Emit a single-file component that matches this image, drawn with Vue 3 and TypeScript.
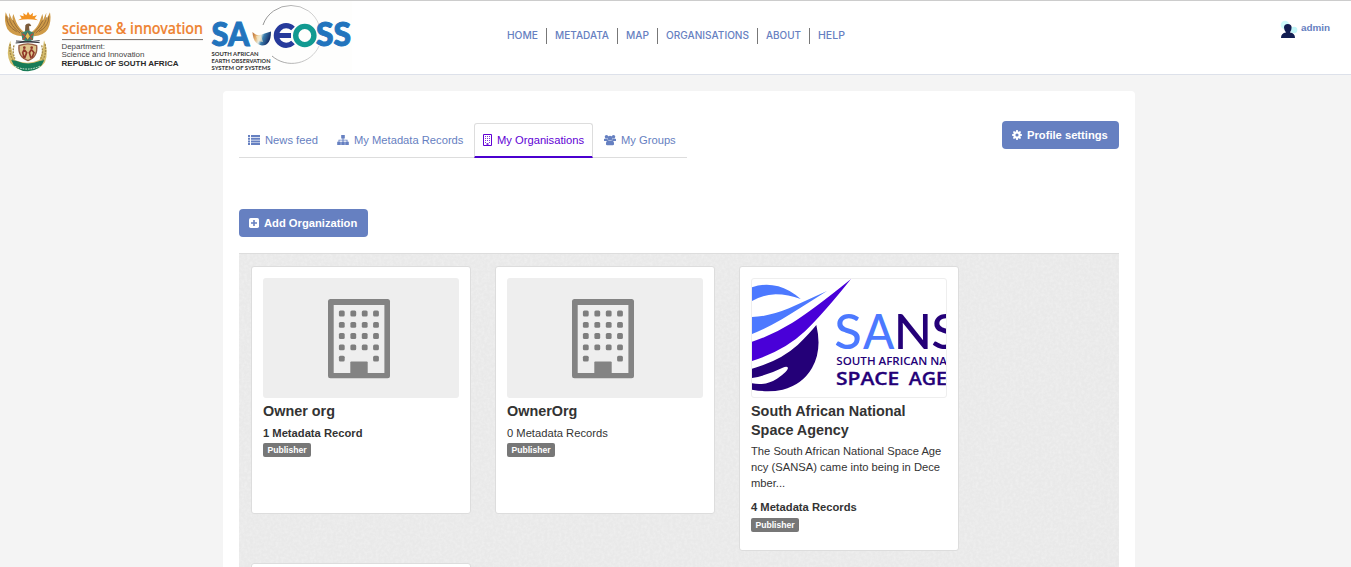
<script setup lang="ts">
interface NavItem { label: string; width: number; cell: number }
interface Org { name: string; description?: string; records: string; strong: boolean; logo: 'building' | 'sansa' }

const nav: NavItem[] = [
  { label: 'HOME', width: 31, cell: 48 },
  { label: 'METADATA', width: 54, cell: 71 },
  { label: 'MAP', width: 23, cell: 40 },
  { label: 'ORGANISATIONS', width: 83, cell: 100 },
  { label: 'ABOUT', width: 35, cell: 52 },
  { label: 'HELP', width: 27, cell: 36 },
]

const orgs: Org[] = [
  { name: 'Owner org', records: '1 Metadata Record', strong: true, logo: 'building' },
  { name: 'OwnerOrg', records: '0 Metadata Records', strong: false, logo: 'building' },
  {
    name: 'South African National Space Agency',
    description: 'The South African National Space Agency (SANSA) came into being in December...',
    records: '4 Metadata Records', strong: true, logo: 'sansa',
  },
]
const dotsX = [78.8, 90.3, 101.7, 113]
const dotsY = [35.5, 46.8, 58, 69.3, 80.6]
const windows = dotsY.flatMap((y, r) => dotsX.filter((_, c) => r < 4 || c === 0 || c === 3).map((x) => ({ x, y })))
</script>

<template>
  <div class="page">
    <header class="header">
      <svg class="brand" width="360" height="73" viewBox="0 1 360 73">
        <defs>
          <linearGradient id="globe" x1="0" x2="1" y1="0" y2="0.3">
            <stop offset="0" stop-color="#b5652a" /><stop offset="0.3" stop-color="#e8b878" />
            <stop offset="0.5" stop-color="#dfe9e4" /><stop offset="0.65" stop-color="#3b7fae" /><stop offset="1" stop-color="#152c66" />
          </linearGradient>
          <linearGradient id="orbit" x1="0" x2="1"><stop offset="0" stop-color="#777" /><stop offset="1" stop-color="#ccc" /></linearGradient>
        </defs>
        <rect x="0" y="1" width="352" height="72" fill="#fefefd" />
        <g transform="scale(.33333)">
          <path d="M31 122Q16 160 31 189Q48 211 83 212Q120 210 135 187Q147 155 132 121Q128 160 118 180Q82 196 46 181Q34 155 31 122Z" fill="#d6bd6c" />
          <path d="M34 180Q44 213 84 214Q123 211 133 180L119 183Q84 198 48 182Z" fill="#187b57" />
          <path d="M45 199Q82 216 121 198" fill="none" stroke="#d9e9d8" stroke-width="3" stroke-dasharray="5 3" />
          <path d="M31 132Q26 158 39 180M135 132Q141 158 128 180M42 136Q36 158 45 176M125 136Q131 158 122 176" fill="none" stroke="#a5894a" stroke-width="4" stroke-dasharray="6 3" />
          <path d="M17 37Q11 65 22 87Q34 106 66 109L75 99Q57 85 49 67L40 42Q36 50 38 62L27 38L29 62ZM150 37Q155 65 144 87Q132 106 102 109L92 99Q111 85 118 67L127 42Q131 50 128 62L139 38L137 62Z" fill="#cf9b48" />
          <path d="M20 49Q19 78 50 95M27 52Q31 77 60 99M38 61Q48 82 66 99M146 49Q148 78 117 95M140 52Q136 77 107 99M129 61Q119 82 101 99" fill="none" stroke="#8d6434" stroke-width="2.5" />
          <path d="M54 61L65 55L59 46L71 49L70 39L79 46L84 35L90 46L99 38L98 49L111 46L104 55L114 61Q84 55 54 61Z" fill="#f39321" />
          <path d="M76 76Q80 68 90 71L94 78L87 79L89 95L84 105L75 94Z" fill="#7b5b39" />
          <path d="M64 98L83 91L102 98L99 119L84 127L67 119Z" fill="#3e876c" />
          <path d="M67 101L77 110L69 119M99 101L89 110L97 119" fill="none" stroke="#c54833" stroke-width="4" />
          <path d="M83 95L91 109L83 121L75 109Z" fill="#e3bf51" stroke="#344d66" stroke-width="2" />
          <path d="M48 123L119 128M47 129L119 122" stroke="#33343c" stroke-width="3" />
          <path d="M57 137Q84 126 110 137Q114 171 84 182Q53 171 57 137Z" fill="#dcc58c" stroke="#965c42" stroke-width="4" />
          <circle cx="73" cy="143" r="4" fill="#91382a" /><circle cx="95" cy="143" r="4" fill="#91382a" />
          <path d="M73 148L68 158L73 175M73 149L80 158L74 174M95 148L88 158L93 175M95 149L102 158L96 173" fill="none" stroke="#91382a" stroke-width="5" />
        </g>
        <text x="62" y="34.2" class="dsi" textLength="141" lengthAdjust="spacingAndGlyphs">science &amp; innovation</text>
        <path d="M62 39.6H203" stroke="#776f68" stroke-width="1" />
        <g class="department">
          <text x="61.5" y="48.5" textLength="43.5" lengthAdjust="spacingAndGlyphs">Department:</text>
          <text x="61.5" y="57.3" textLength="83" lengthAdjust="spacingAndGlyphs">Science and Innovation</text>
          <text x="61.5" y="66" class="republic" textLength="117" lengthAdjust="spacingAndGlyphs">REPUBLIC OF SOUTH AFRICA</text>
        </g>
        <path d="M263 25A29.5 28.5 0 0 1 319 25M319 46A29.5 28.5 0 0 1 272 56" fill="none" stroke="url(#orbit)" stroke-width=".8" />
        <text x="211.5" y="46" class="saeoss" textLength="38" lengthAdjust="spacingAndGlyphs">SA</text>
        <text x="316" y="46" class="saeoss" textLength="35" lengthAdjust="spacingAndGlyphs">SS</text>
        <path d="M252.5 32Q257 37 263 34L271 31.5Q271 45.5 262 45.5Q253 44 252.5 32Z" fill="url(#globe)" />
        <path d="M256 36L261 35L263 42L258 41Z" fill="#f4e9cb" opacity=".7" />
        <path d="M293 28.5A9.8 9.8 0 1 0 293 42.5M276 35.5H291" fill="none" stroke="#263a9b" stroke-width="5.2" />
        <circle cx="304.8" cy="35.5" r="9.1" fill="none" stroke="#119a91" stroke-width="5.4" />
        <g class="system">
          <text x="211.5" y="55.6" textLength="47" lengthAdjust="spacingAndGlyphs">SOUTH AFRICAN</text>
          <text x="211.5" y="62.6" textLength="59" lengthAdjust="spacingAndGlyphs">EARTH OBSERVATION</text>
          <text x="211.5" y="69.6" textLength="59" lengthAdjust="spacingAndGlyphs">SYSTEM OF SYSTEMS</text>
        </g>
      </svg>
      <nav class="nav">
        <a v-for="item in nav" :key="item.label" :style="{ width: item.cell + 'px' }">
          <svg :width="item.width" height="16"><text x="0" y="11" :textLength="item.width" lengthAdjust="spacingAndGlyphs">{{ item.label }}</text></svg>
        </a>
      </nav>
      <div class="user">
        <svg width="18" height="20" viewBox="0 0 18 20">
          <circle cx="5" cy="5" r="4.3" fill="#cffafb" /><circle cx="14" cy="10" r="3.3" fill="#c3f6f8" />
          <path d="M1 18Q1 13 6 12.5Q4 10 4 7.5Q4 4 7.8 4T11.6 7.5Q11.6 10 10 12.5Q15 13 15 18Z" fill="#121d51" />
        </svg>
        <span>admin</span>
      </div>
    </header>

    <main class="panel">
      <div class="toolbar">
        <div class="tabs">
          <a class="tab feed">
            <svg width="12" height="12" viewBox="0 0 12 12"><path d="M0 1h2v2H0zM3 1h9v2H3zM0 3.7h2v2H0zM3 3.7h9v2H3zM0 6.4h2v2H0zM3 6.4h9v2H3zM0 9.1h2v1.8H0zM3 9.1h9v1.8H3z" fill="currentColor" /></svg>News feed
          </a>
          <a class="tab records">
            <svg width="12" height="12" viewBox="0 0 12 12"><path d="M4.2 1h3.6v3.4H6.5v1.3h4v2h1.3V11H8.2V7.7h1.4V6.6H6.5v1.1h1.3V11H4.2V7.7h1.3V6.6H2.4v1.1h1.4V11H.2V7.7h1.3v-2h4V4.4H4.2z" fill="currentColor" /></svg>My Metadata Records
          </a>
          <a class="tab organisations">
            <svg width="9" height="12" viewBox="0 0 9 12"><path d="M.5.5h8v11h-8z" fill="none" stroke="currentColor" /><path d="M2 2h1v1H2zM4 2h1v1H4zM6 2h1v1H6zM2 4h1v1H2zM4 4h1v1H4zM6 4h1v1H6zM2 6h1v1H2zM4 6h1v1H4zM6 6h1v1H6zM2 8h1v1H2zM6 8h1v1H6zM3.5 9h2v2.5h-2z" fill="currentColor" opacity=".8" /></svg>My Organisations
          </a>
          <a class="tab groups">
            <svg width="12" height="12" viewBox="0 0 13 12"><g fill="currentColor"><circle cx="2.7" cy="2.5" r="1.9" /><circle cx="10.3" cy="2.5" r="1.9" /><circle cx="6.5" cy="4" r="2.6" /><path d="M0 7.2V5Q1 4 3.6 4.7L4.6 6.3 2.8 7.2zM13 7.2V5Q12 4 9.4 4.7L8.4 6.3l1.8.9zM2.1 10.5Q2.1 6.5 4.6 6.2Q6.5 7.4 8.4 6.2Q10.9 6.5 10.9 10.5Q10.6 11.7 9.5 11.7h-6Q2.3 11.7 2.1 10.5z" /></g></svg>My Groups
          </a>
        </div>
        <button class="button settings">
          <svg width="10" height="10" viewBox="0 0 10 10"><path fill="#fff" fill-rule="evenodd" d="M4.2 0h1.6l.2 1.4.8.3L8 .9 9.1 2l-.8 1.2.3.8 1.4.2v1.6L8.6 6l-.3.8L9.1 8 8 9.1l-1.2-.8-.8.3L5.8 10H4.2L4 8.6l-.8-.3L2 9.1.9 8l.8-1.2L1.4 6 0 5.8V4.2L1.4 4l.3-.8L.9 2 2 .9l1.2.8.8-.3zM5 3.4A1.6 1.6 0 1 0 5 6.6A1.6 1.6 0 1 0 5 3.4z" /></svg>Profile settings
        </button>
      </div>
      <button class="button add">
        <svg width="10" height="10" viewBox="0 0 10 10"><rect width="10" height="10" rx="1.7" fill="#fff" /><path d="M5 2v6M2 5h6" stroke="#6680c1" stroke-width="1.6" /></svg>Add Organization
      </button>
      <section class="listing">
        <svg class="texture" width="880" height="330">
          <filter id="grain"><feTurbulence type="fractalNoise" baseFrequency=".35" numOctaves="2" seed="4" /><feColorMatrix values="0 0 0 0 1  0 0 0 0 1  0 0 0 0 1  1.6 0 0 0 -.55" /></filter>
          <rect width="880" height="330" filter="url(#grain)" opacity=".3" />
        </svg>
        <article v-for="org in orgs" :key="org.name" class="card" :class="{ tall: org.description }">
          <svg v-if="org.logo === 'building'" class="building" width="196" height="120">
            <rect width="196" height="120" rx="3" fill="#eee" />
            <rect x="65" y="21" width="62" height="79.3" rx="2.5" fill="#838383" />
            <rect x="70.7" y="27" width="50.7" height="68" fill="#eee" />
            <rect v-for="dot in windows" :key="`${dot.x}-${dot.y}`" :x="dot.x - 2.9" :y="dot.y - 2.9" width="5.8" height="5.8" rx="1.5" fill="#7e7e7e" />
            <path d="M87.3 96V84.5q0-1 1-1h15.4q1 0 1 1V96z" fill="#838383" />
          </svg>
          <div v-else class="sansa">
            <svg width="194" height="118" viewBox="51 87 582 354">
              <path d="M51 112Q90 98 130 109Q163 118 197 147Q160 133 122 133Q84 134 51 153Z" fill="#4c79ff" />
              <path d="M51 201Q101 200 162 175Q210 153 276 123Q196 174 142 207Q94 235 51 252Z" fill="#4c79ff" />
              <path d="M51 275Q111 256 171 219Q232 181 348 87Q270 185 210 244Q149 302 51 333Z" fill="#4900d8" />
              <path d="M51 356Q135 333 188 285Q223 251 244 225Q262 301 231 354Q202 404 143 419Q100 428 51 419V400Q92 408 126 386Q158 365 159 354Q157 347 143 353Q94 377 51 384Z" fill="#240078" />
              <g class="agency">
                <text x="298" y="296" class="acronym" fill="#4c79ff" textLength="83" lengthAdjust="spacingAndGlyphs">S</text>
                <text x="384" y="296" class="acronym" fill="#4c79ff" textLength="94" lengthAdjust="spacingAndGlyphs">A</text>
                <text x="476" y="296" class="acronym" textLength="115" lengthAdjust="spacingAndGlyphs">N</text>
                <text x="589" y="296" class="acronym" textLength="83" lengthAdjust="spacingAndGlyphs">S</text>
                <text x="304" y="345" class="country" textLength="332" lengthAdjust="spacingAndGlyphs">SOUTH AFRICAN NA</text>
                <text x="303" y="404" class="space" textLength="190" lengthAdjust="spacingAndGlyphs">SPACE</text>
                <text x="521" y="404" class="space" textLength="115" lengthAdjust="spacingAndGlyphs">AGE</text>
              </g>
            </svg>
          </div>
          <h3>{{ org.name }}</h3>
          <p v-if="org.description">{{ org.description }}</p>
          <div class="count" :class="{ strong: org.strong }">{{ org.records }}</div>
          <span class="badge">Publisher</span>
        </article>
        <article class="card"></article>
      </section>
    </main>
  </div>
</template>

<style>
html, body { margin: 0; overflow: hidden; background: #f4f4f4; }
</style>

<style scoped>
* { box-sizing: border-box; }
.page { height: 567px; overflow: hidden; background: #f4f4f4; font: 11.2px/16px "Liberation Sans", Arial, sans-serif; color: #333; }
.header { position: relative; display: flex; height: 75px; background: #fff; border-top: 1px solid #ccc; border-bottom: 1px solid #dde1ea; }
.brand { display: block; flex: none; }
.dsi { font: 500 16.2px "Noto Sans", sans-serif; fill: #ee8231; stroke: #ee8231; stroke-width: .2px; }
.department { font: 7.8px "Liberation Sans", sans-serif; fill: #444; }
.republic { font-weight: bold; fill: #292929; }
.saeoss { font: 900 32px Lato, sans-serif; fill: #2274bd; stroke: #2274bd; stroke-width: 1px; }
.system { font: bold 6px Lato, sans-serif; fill: #333; }
.nav { display: flex; margin: 27px 0 0 147px; height: 16px; }
.nav a { display: block; height: 16px; border-right: 1px solid #777; }
.nav a + a { padding-left: 8px; }
.nav a:first-child { width: 40px !important; }
.nav a:last-child { border: 0; }
.nav svg { display: block; overflow: visible; }
.nav text { font: 500 10.2px Inter, sans-serif; fill: #6680c1; }
.user { display: flex; margin-left: auto; padding: 19px 21px 0 0; gap: 3px; color: #6680c1; font: bold 9.9px/16px "Liberation Sans", sans-serif; }
.panel { width: 912px; height: 500px; margin: 16px 0 0 223px; padding: 30px 16px 0; background: #fff; border-radius: 4px; }
.toolbar { display: flex; justify-content: space-between; align-items: flex-start; height: 88px; }
.tabs { display: flex; width: 448px; height: 35px; margin-top: 2px; box-shadow: inset 0 -1px #ddd; }
.tab { display: flex; align-items: center; gap: 5px; height: 35px; padding: 0 0 1px 9px; color: #6680c1; white-space: nowrap; }
.tab svg { flex: none; }
.feed { width: 89px; }
.records { width: 146px; }
.organisations { width: 119px; padding: 0 0 0 8px; border: 1px solid #ddd; border-bottom: 2px solid #4b00cf; border-radius: 3px 3px 0 0; color: #6100d4; background: #fff; }
.groups { width: 94px; padding-left: 11px; }
.button { display: flex; align-items: center; height: 28px; padding: 0 10px; gap: 5px; border: 0; border-radius: 4px; background: #6680c1; color: #fff; font: bold 11.2px/16px "Liberation Sans", sans-serif; white-space: nowrap; }
.settings { width: 117px; }
.add { width: 129px; }
.listing { position: relative; display: grid; grid-template-columns: repeat(3, 220px); align-items: start; gap: 12px 24px; height: 400px; margin-top: 16px; padding: 12px; border-top: 1px solid #ddd; background: #e9e9e9; }
.texture { position: absolute; left: 0; top: 0; }
.card { position: relative; height: 248px; padding: 11px; background: #fff; border: 1px solid #ddd; border-radius: 3px; }
.tall { height: 285px; }
.building { display: block; }
.sansa { width: 196px; height: 120px; overflow: hidden; border: 1px solid #eee; border-radius: 3px; }
.sansa svg { display: block; }
.agency { fill: #240078; }
.acronym { font: 500 145px Lato, sans-serif; stroke: currentColor; stroke-width: 0; }
.country { font: 600 32px "Open Sans", sans-serif; }
.space { font: 600 56px "Open Sans", sans-serif; stroke: #240078; stroke-width: 1px; }
h3 { margin: 4px 0 0; font: bold 14.4px/19px "Liberation Sans", sans-serif; }
p { width: 192px; margin: 3px 0 8px; word-break: break-all; }
.count { margin-top: 4px; }
.strong { font-weight: bold; }
.badge { display: block; width: 48px; height: 14px; margin-top: 2px; border-radius: 2px; background: #777; color: #fff; font: bold 8.6px/14px "Liberation Sans", sans-serif; text-align: center; }
.tall .badge { margin-top: 3px; }
</style>
